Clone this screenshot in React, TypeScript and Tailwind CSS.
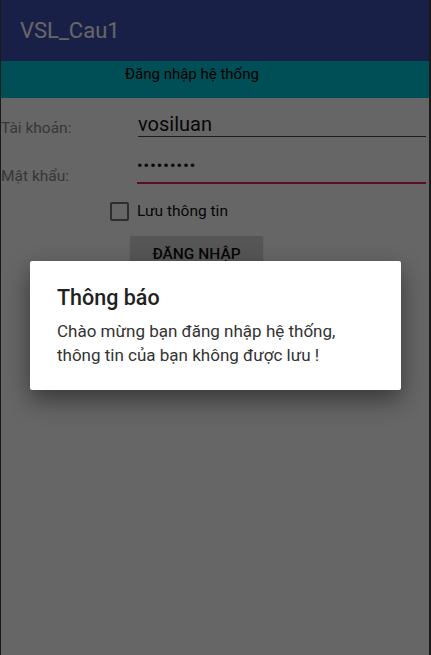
export default function App() {
  return (
    <div className="w-[431px] h-[655px] bg-[#1a1a1a] flex" style={{ fontFamily: 'Roboto, "Noto Sans", sans-serif' }}>
      <div className="relative ml-[1px] w-[428px] h-full bg-white overflow-hidden">
        {/* app bar */}
        <div className="h-[61px] bg-[#3f51b5] flex items-center px-[19px]">
          <span className="text-white text-[22px] leading-none">VSL_Cau1</span>
        </div>
        <div className="h-[37px] bg-[#00c4d6] flex pl-[124px] pt-[2px]">
          <span className="text-black text-[15px]">Đăng nhập hệ thống</span>
        </div>

        <div className="flex items-end mt-[15px] h-[24px]">
          <span className="w-[137px] text-[15.5px] text-[#8a8a8a] mb-[-3px]">Tài khoản:</span>
          <div className="flex-1 mr-[3px] border-b border-[#444] text-[20px] text-[#111] leading-[24px]">vosiluan</div>
        </div>

        <div className="flex items-end mt-[23px] h-[24px]">
          <span className="w-[136px] text-[15.5px] text-[#8a8a8a] mb-[-4px]">Mật khẩu:</span>
          <div className="flex-1 mr-[3px] border-b-2 border-[#e0245e] text-[15px] text-[#111] leading-[20px] pb-[6px] tracking-[1.2px] font-bold">•••••••••</div>
        </div>

        <div className="flex items-center mt-[16px] ml-[109px] gap-[8px]">
          <div className="w-[19px] h-[19px] border-2 border-[#737373] rounded-[2px]" />
          <span className="text-[15.5px] text-[#111]">Lưu thông tin</span>
        </div>

        <div className="ml-[129px] mt-[13px] w-[133px] h-[36px] bg-[#d6d7d7] rounded-[2px] shadow-sm flex items-center justify-center">
          <span className="text-[15.5px] text-[#111] font-medium">ĐĂNG NHẬP</span>
        </div>

        {/* dim overlay */}
        <div className="absolute inset-0 bg-black/60" />

        {/* dialog */}
        <div className="absolute left-[29px] top-[261px] w-[371px] h-[129px] bg-white rounded-[2px] shadow-[0_10px_24px_rgba(0,0,0,0.45)] px-[27px] pt-[24px]">
          <div className="text-[21.5px] text-[#212121] leading-[26px] font-medium">Thông báo</div>
          <div className="mt-[8px] text-[17px] text-[#333] leading-[24px]">
            Chào mừng bạn đăng nhập hệ thống,
            <br />
            thông tin của bạn không được lưu !
          </div>
        </div>
      </div>
      <div className="flex-1" />
    </div>
  );
}
